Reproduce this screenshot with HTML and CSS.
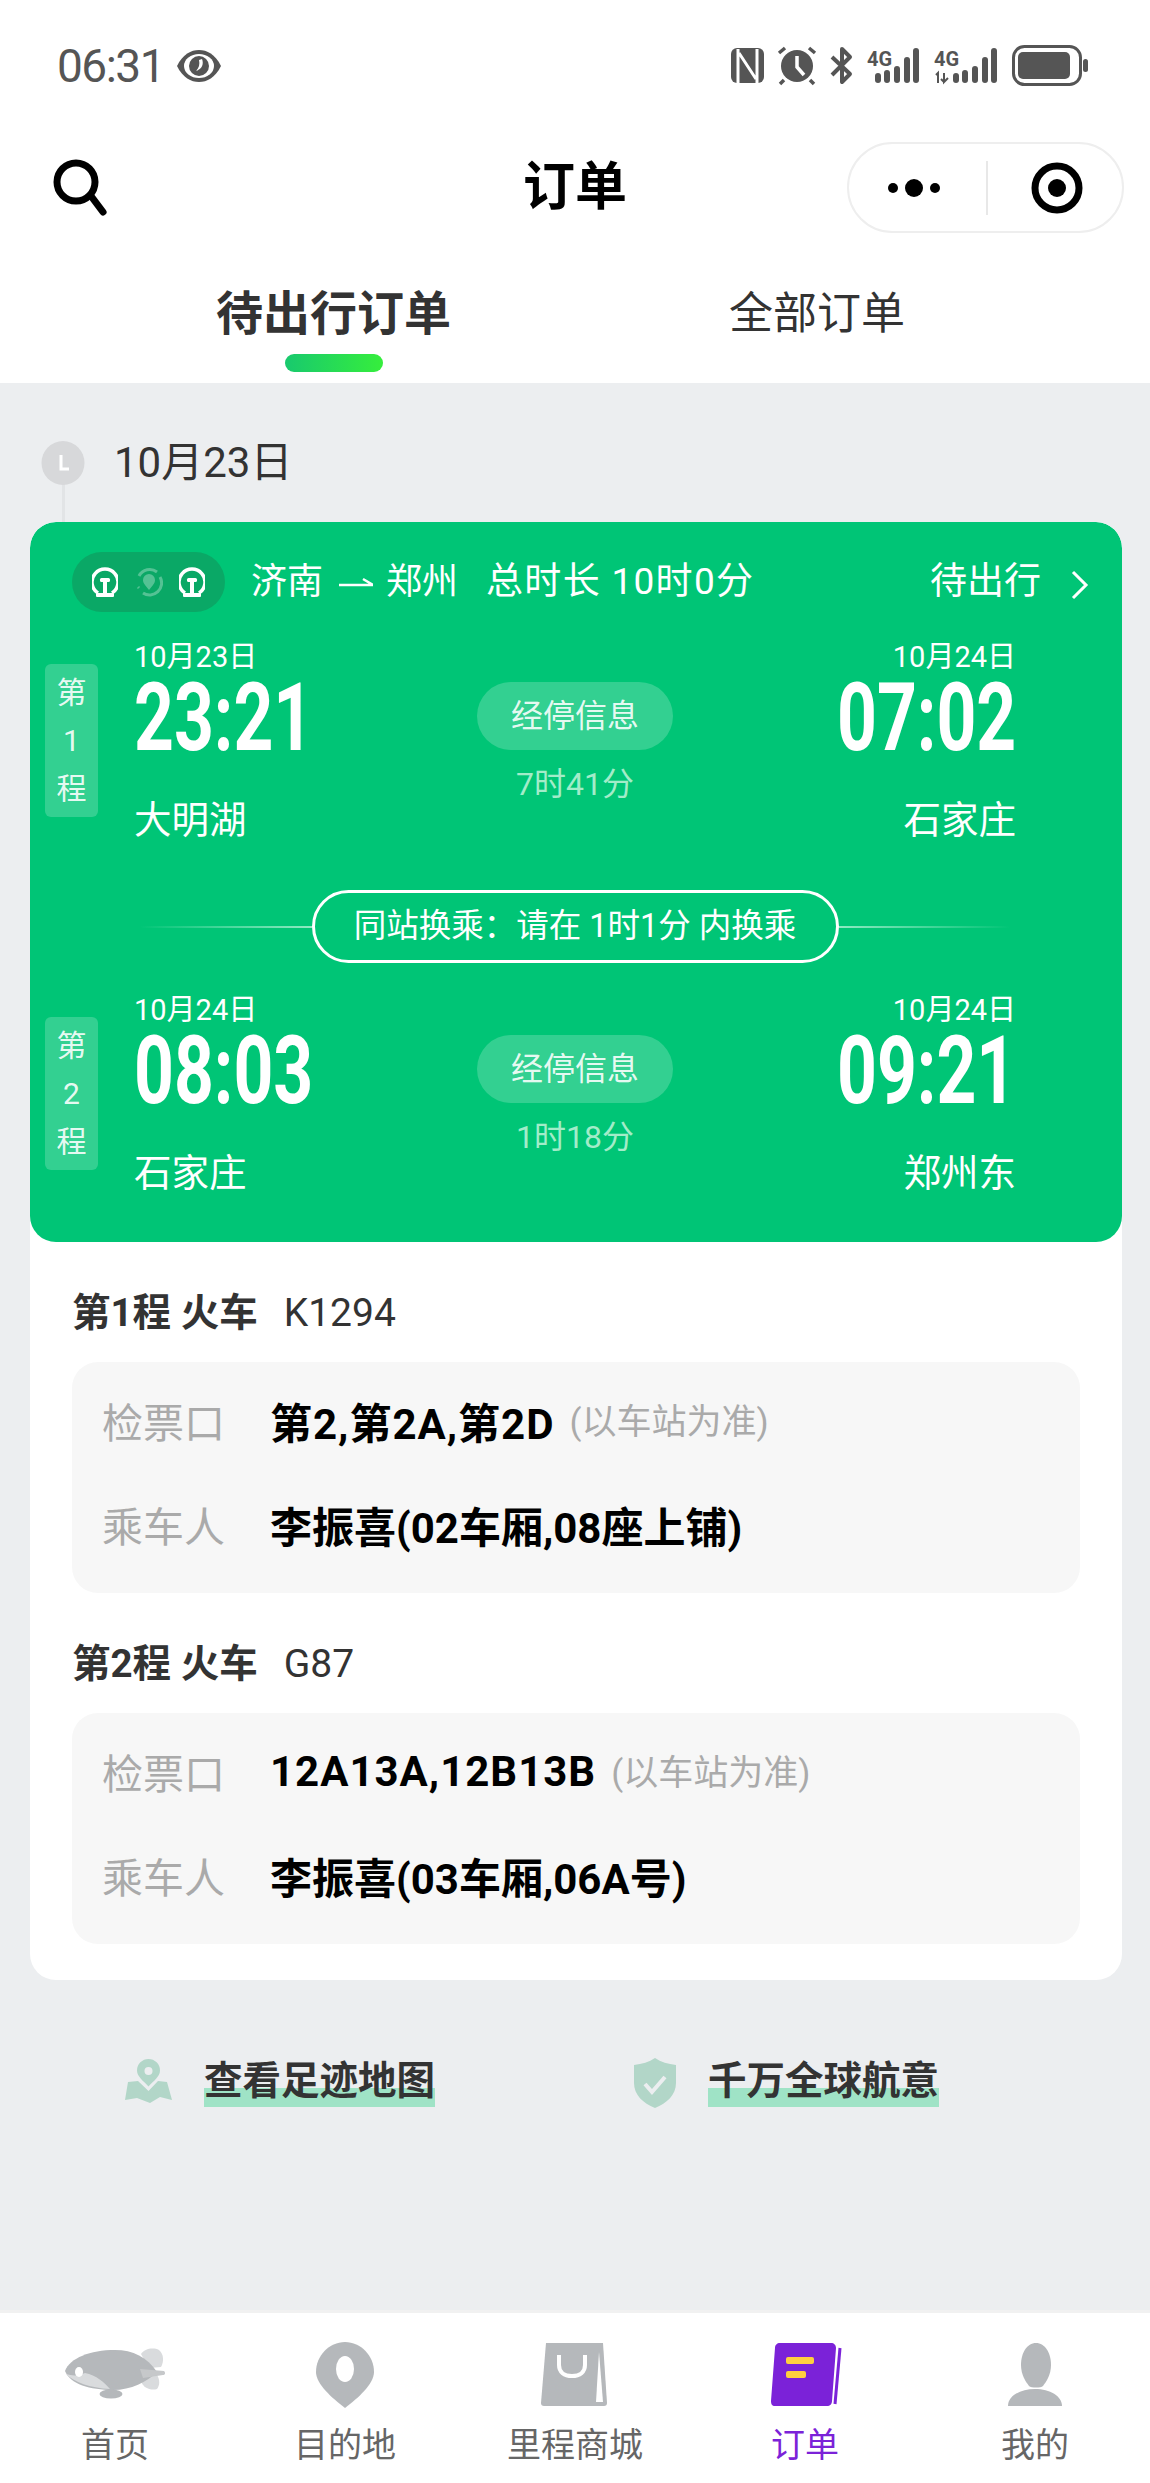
FILE: index.html
```html
<!DOCTYPE html>
<html lang="zh-CN">
  <head>
    <meta charset="UTF-8" />
    <meta name="viewport" content="width=device-width, initial-scale=1.0" />
    <title>订单</title>
    <link rel="stylesheet" href="styles.css">
  </head>
  <body>
    <header class="top">
      <div class="status">
        <div class="status-left">
          <span class="clock">06:31</span>
          <svg class="eye" width="46" height="34" viewBox="0 0 46 34">
            <path d="M1 17C7 5 15 1 23 1s16 4 22 16c-6 12-14 16-22 16S7 29 1 17z" fill="#555" />
            <ellipse cx="23" cy="17" rx="15" ry="12" fill="#fff" />
            <circle cx="23" cy="17" r="10" fill="#555" />
            <path d="M26 10c2 5 0 10-6 12 3-3 4-7 3-11z" fill="#fff" />
          </svg>
        </div>
        <svg class="status-icons" width="360" height="44" viewBox="0 0 360 44">
          <rect x="1" y="4" width="33" height="35" rx="6" fill="#555" />
          <path d="M8 5v34M27 5v34M9 9l17 26" stroke="#fff" stroke-width="3" fill="none" />
          <circle cx="67" cy="22" r="16" fill="#555" />
          <path d="M67 12v11l7 8" stroke="#fff" stroke-width="3.5" fill="none" />
          <path d="M49 9l6-5M79 4l6 5M54 36l-4 4M80 36l4 4" stroke="#555" stroke-width="3.5" fill="none" />
          <path d="M102 13l18 17-8 8V5l8 8-18 18" stroke="#555" stroke-width="4" fill="none" stroke-linejoin="round" />
          <text x="137" y="22" class="net">4G</text>
          <g fill="#555">
            <rect x="145" y="29" width="6" height="10" rx="3" />
            <rect x="154" y="26" width="6" height="13" rx="3" />
            <rect x="164" y="22" width="6" height="17" rx="3" />
            <rect x="174" y="13" width="6" height="26" rx="3" />
            <rect x="183" y="4" width="6" height="35" rx="3" />
            <rect x="223" y="29" width="6" height="10" rx="3" />
            <rect x="232" y="26" width="6" height="13" rx="3" />
            <rect x="242" y="22" width="6" height="17" rx="3" />
            <rect x="252" y="13" width="6" height="26" rx="3" />
            <rect x="261" y="4" width="6" height="35" rx="3" />
          </g>
          <text x="204" y="22" class="net">4G</text>
          <path d="M206 31l2-2v10M214 29v9l4-4M214 38l-3-3" stroke="#555" stroke-width="2" fill="none" />
          <rect x="283.500" y="2.500" width="67" height="38" rx="11" fill="none" stroke="#555" stroke-width="3" />
          <rect x="288" y="8" width="52" height="27" rx="5" fill="#555" />
          <rect x="353" y="15" width="5" height="13" rx="2.500" fill="#555" />
        </svg>
      </div>

      <div class="title-bar">
        <svg class="search" width="60" height="60" viewBox="0 0 60 60">
          <circle cx="24" cy="24" r="19" fill="none" stroke="#000" stroke-width="7" />
          <path d="M39 38l12 16" stroke="#000" stroke-width="7" stroke-linecap="round" />
        </svg>
        <h1>订单</h1>
        <div class="capsule">
          <div class="dots"><i></i><i class="big"></i><i></i></div>
          <div class="capsule-line"></div>
          <svg width="52" height="52" viewBox="0 0 52 52">
            <circle cx="26" cy="26" r="22" fill="none" stroke="#000" stroke-width="7" />
            <circle cx="26" cy="26" r="9" fill="#000" />
          </svg>
        </div>
      </div>

      <div class="tabs">
        <div class="tab active">待出行订单<span class="tab-bar"></span></div>
        <div class="tab">全部订单</div>
      </div>
    </header>

    <main class="content">
      <div class="date-row">
        <svg width="44" height="81" viewBox="0 0 44 81">
          <rect x="21" y="40" width="3" height="41" fill="#e2e4e6" />
          <ellipse cx="22" cy="22" rx="21.500" ry="22" fill="#d7d8da" />
          <path d="M20 14v14h8" stroke="#fff" stroke-width="3" fill="none" />
        </svg>
        <span>10月23日</span>
      </div>

      <section class="order">
        <div class="green">
          <div class="route">
            <div class="route-icons">
              <svg width="26" height="30" viewBox="0 0 26 30" class="rail">
                <path d="M6 26A13 13 0 1 1 20 26" />
                <rect x="8" y="11" width="10" height="4" rx="1.500" fill="#fff" stroke="none" />
                <rect x="11" y="14" width="4" height="13" fill="#fff" stroke="none" />
                <rect x="4" y="26" width="18" height="4" rx="1" fill="#fff" stroke="none" />
              </svg>
              <svg width="28" height="30" viewBox="0 0 28 30" class="rail dim">
                <path d="M4 9A12 12 0 0 1 22 5M25 10A12 12 0 0 1 8 26M3 20l1 1" />
                <path d="M14 23c-4-5-6-7-6-10a6 6 0 0 1 12 0c0 3-2 5-6 10z" fill="#fff" stroke="none" />
              </svg>
              <svg width="26" height="30" viewBox="0 0 26 30" class="rail">
                <path d="M6 26A13 13 0 1 1 20 26" />
                <rect x="8" y="11" width="10" height="4" rx="1.500" fill="#fff" stroke="none" />
                <rect x="11" y="14" width="4" height="13" fill="#fff" stroke="none" />
                <rect x="4" y="26" width="18" height="4" rx="1" fill="#fff" stroke="none" />
              </svg>
            </div>
            <span class="city">济南</span>
            <svg class="to" width="34" height="14" viewBox="0 0 34 14">
              <path d="M0 10h34L24 4" stroke="#fff" stroke-width="2.500" fill="none" />
            </svg>
            <span class="city">郑州</span>
            <span class="total">总时长 10时0分</span>
            <span class="state">待出行</span>
            <svg class="chevron" width="18" height="30" viewBox="0 0 18 30">
              <path d="M2 2l13 13L2 28" stroke="#fff" stroke-width="3" fill="none" />
            </svg>
          </div>

          <div class="leg">
            <div class="leg-no"><span>第</span><span>1</span><span>程</span></div>
            <div class="stop">
              <div class="stop-date">10月23日</div>
              <div class="stop-time">23:21</div>
              <div class="stop-name">大明湖</div>
            </div>
            <div class="middle">
              <div class="via">经停信息</div>
              <div class="span">7时41分</div>
            </div>
            <div class="stop end">
              <div class="stop-date">10月24日</div>
              <div class="stop-time">07:02</div>
              <div class="stop-name">石家庄</div>
            </div>
          </div>

          <div class="transfer">
            <div class="rule left"></div>
            <div class="transfer-pill">同站换乘：请在 1时1分 内换乘</div>
            <div class="rule"></div>
          </div>

          <div class="leg">
            <div class="leg-no"><span>第</span><span>2</span><span>程</span></div>
            <div class="stop">
              <div class="stop-date">10月24日</div>
              <div class="stop-time">08:03</div>
              <div class="stop-name">石家庄</div>
            </div>
            <div class="middle">
              <div class="via">经停信息</div>
              <div class="span">1时18分</div>
            </div>
            <div class="stop end">
              <div class="stop-date">10月24日</div>
              <div class="stop-time">09:21</div>
              <div class="stop-name">郑州东</div>
            </div>
          </div>
        </div>

        <div class="details">
          <h2><b>第1程 火车</b><span>K1294</span></h2>
          <div class="info">
            <div class="info-row">
              <span class="info-key">检票口</span>
              <b class="gate">第2,第2A,第2D</b>
              <span class="info-note">(以车站为准)</span>
            </div>
            <div class="info-row">
              <span class="info-key">乘车人</span>
              <b>李振喜(02车厢,08座上铺)</b>
            </div>
          </div>

          <h2 class="second"><b>第2程 火车</b><span>G87</span></h2>
          <div class="info">
            <div class="info-row">
              <span class="info-key">检票口</span>
              <b class="gate">12A13A,12B13B</b>
              <span class="info-note">(以车站为准)</span>
            </div>
            <div class="info-row">
              <span class="info-key">乘车人</span>
              <b>李振喜(03车厢,06A号)</b>
            </div>
          </div>
        </div>
      </section>

      <div class="links">
        <a class="link">
          <svg width="47" height="48" viewBox="0 0 47 48">
            <path d="M23.500 0a11.500 11.500 0 0 1 11.500 11.500c0 6-6 10-11.500 16-5.500-6-11.500-10-11.500-16A11.500 11.500 0 0 1 23.500 0z" fill="#b2d6c8" />
            <circle cx="23.500" cy="12" r="4" fill="#eceef0" />
            <path d="M3 23l10-1 10.500 10L33 22l9 1 5 18-12-3-10 6-13-5-12 2z" fill="#b2d6c8" />
          </svg>
          <span>查看足迹地图</span>
        </a>
        <a class="link">
          <svg width="42" height="50" viewBox="0 0 42 50">
            <path d="M21 0c6 4 13 6 21 7v18c0 12-9 20-21 25C9 45 0 37 0 25V7c8-1 15-3 21-7z" fill="#b2d6c8" />
            <path d="M11 26l7 8 13-15" stroke="#eceef0" stroke-width="4" fill="none" />
          </svg>
          <span>千万全球航意</span>
        </a>
      </div>
    </main>

    <nav class="tabbar">
      <div class="nav-item">
        <svg width="110" height="70" viewBox="0 0 110 70">
          <path d="M81 14c3-5 12-7 18-4 5 4 5 12 2 17l-12 1z" fill="#d9dbdd" />
          <path d="M83 38l14-3c3 5 3 10 0 14-6 2-14-1-16-8z" fill="#d9dbdd" />
          <path d="M5 31C10 18 30 10 55 10c18 0 32 7 42 22-10 10-26 18-44 18C30 50 10 44 5 31z" fill="#b5b8bb" />
          <path d="M6 34c8 8 24 14 44 15-5-6-14-14-25-16-6 3-13 3-19 1z" fill="#d9dbdd" />
          <ellipse cx="19" cy="32" rx="4" ry="5" fill="#fff" />
          <ellipse cx="51" cy="54" rx="11.500" ry="4.500" fill="#b5b8bb" />
          <path d="M80 29l24 2c2 2 1 4-1 4l-20 3z" fill="#c6c8ca" />
        </svg>
        <span>首页</span>
      </div>
      <div class="nav-item">
        <svg width="110" height="70" viewBox="0 0 110 70">
          <path d="M55 2c16 0 29 14 29 30C84 44 68 58 55 68 42 58 26 44 26 32 26 16 39 2 55 2z" fill="#b5b8bb" />
          <ellipse cx="55" cy="29" rx="9" ry="13" fill="#fff" />
        </svg>
        <span>目的地</span>
      </div>
      <div class="nav-item">
        <svg width="110" height="70" viewBox="0 0 110 70">
          <path d="M26 3h57l4 60c0 2-1 3-3 3H24c-2 0-3-1-3-3z" fill="#b5b8bb" />
          <path d="M39 15v10c0 7 5 11 13 11s13-4 13-11V15" fill="none" stroke="#fff" stroke-width="4" />
          <path d="M79 12l4 50h-7z" fill="#fff" />
        </svg>
        <span>里程商城</span>
      </div>
      <div class="nav-item active">
        <svg width="110" height="70" viewBox="0 0 110 70">
          <path d="M30 3h51c3 0 5 2 5 5l-4 53c0 3-2 5-5 5H25c-3 0-4-2-4-5l4-53c0-3 2-5 5-5z" fill="#7b22d8" />
          <path d="M90 8l-5 56" stroke="#7b22d8" stroke-width="3" />
          <rect x="36" y="17" width="28" height="7" rx="2" fill="#ffcf3f" />
          <rect x="36" y="31" width="20" height="7" rx="2" fill="#ffcf3f" />
        </svg>
        <span>订单</span>
      </div>
      <div class="nav-item">
        <svg width="110" height="70" viewBox="0 0 110 70">
          <path d="M56 3c9 0 15 10 15 22 0 10-5 17-8 21-2 2-12 2-14 0-3-4-8-11-8-21 0-12 6-22 15-22z" fill="#b5b8bb" />
          <path d="M28 66c0-10 12-17 27-17s27 7 27 17z" fill="#b5b8bb" />
        </svg>
        <span>我的</span>
      </div>
    </nav>
  </body>
</html>
```

FILE: styles.css
```css
* {
  margin: 0;
  padding: 0;
  box-sizing: border-box;
}

body {
  font-family: Roboto, "Noto Sans CJK SC", sans-serif;
  width: 1150px;
  height: 2483px;
  background: #eceef0;
  color: #333;
  display: flex;
  flex-direction: column;
  overflow: hidden;
}

/* Top white block */
.top {
  height: 383px;
  background: #fff;
}

.status {
  height: 132px;
  padding: 0 60px 0 57px;
  display: flex;
  justify-content: space-between;
  align-items: center;
}

.status-left {
  display: flex;
  align-items: center;
  gap: 12px;
}

.clock {
  font-size: 46px;
  font-weight: 400;
  color: #555;
  letter-spacing: -1.5px;
  line-height: 46px;
}

.net {
  font-family: Roboto, sans-serif;
  font-size: 20px;
  font-weight: 700;
  fill: #555;
}

.title-bar {
  height: 91px;
  margin-top: 10px;
  padding: 0 26px;
  display: grid;
  grid-template-columns: 1fr auto 1fr;
  align-items: center;
}

.search {
  margin-left: 26px;
}

.title-bar h1 {
  font-size: 52px;
  line-height: 60px;
  font-weight: 700;
  color: #000;
}

.capsule {
  justify-self: end;
  width: 277px;
  height: 91px;
  border: 2px solid #eeeeee;
  border-radius: 46px;
  display: flex;
  align-items: center;
  padding-left: 39px;
}

.dots {
  display: flex;
  align-items: center;
  gap: 7px;
}

.dots i {
  width: 10px;
  height: 10px;
  border-radius: 50%;
  background: #000;
}

.dots i.big {
  width: 18px;
  height: 18px;
}

.capsule-line {
  width: 2px;
  height: 54px;
  background: #e8e8e8;
  margin: 0 43px 0 46px;
}

.tabs {
  margin-top: 51px;
  padding-left: 216px;
  display: flex;
  gap: 278px;
}

.tab {
  font-size: 44px;
  line-height: 60px;
  color: #333;
  white-space: nowrap;
  display: flex;
  flex-direction: column;
  align-items: center;
}

.tab.active {
  font-size: 47px;
  font-weight: 700;
}

.tab-bar {
  width: 98px;
  height: 18px;
  margin-top: 10px;
  border-radius: 9px;
  background: linear-gradient(90deg, #18c96e, #36ee3c);
}

/* Date line */
.content {
  flex: 1;
}

.date-row {
  margin-top: 58px;
  padding-left: 41px;
  height: 81px;
  display: flex;
  gap: 29px;
  font-size: 42px;
  line-height: 44px;
}

/* Order card */
.order {
  margin: 0 28px 0 30px;
  background: #fff;
  border-radius: 26px;
  overflow: hidden;
}

.green {
  height: 720px;
  padding-top: 30px;
  background: #00c576;
  border-radius: 26px;
  color: #fff;
}

.route {
  height: 60px;
  padding: 0 33px 0 42px;
  display: flex;
  align-items: center;
  font-size: 36px;
}

.route span {
  margin-bottom: 8px;
}

.route-icons {
  width: 153px;
  height: 60px;
  margin-right: 26px;
  padding: 0 20px;
  border-radius: 30px;
  background: #0aa866;
  display: flex;
  align-items: center;
  justify-content: space-between;
}

.rail {
  fill: none;
  stroke: #fff;
  stroke-width: 3.5;
}

.rail.dim {
  opacity: 0.3;
  stroke-width: 3;
}

.to {
  margin: 0 13px 0 16px;
}

.total {
  margin-left: 28px;
  font-size: 37px;
  letter-spacing: 1.3px;
}

.state {
  margin-left: auto;
  font-size: 37px;
}

.chevron {
  margin: 6px 0 0 30px;
}

.leg {
  margin-top: 28px;
  padding: 0 106px 0 15px;
  display: flex;
  align-items: center;
}

.leg-no {
  width: 53px;
  height: 153px;
  margin-right: 36px;
  border-radius: 6px;
  background: rgba(255, 255, 255, 0.2);
  display: flex;
  flex-direction: column;
  align-items: center;
  justify-content: center;
  font-size: 30px;
  line-height: 48px;
  color: rgba(255, 255, 255, 0.9);
}

.stop {
  flex: 1;
  display: flex;
  flex-direction: column;
  white-space: nowrap;
}

.stop.end {
  align-items: flex-end;
}

.stop-date {
  margin-top: 1px;
  font-size: 29px;
  line-height: 33px;
}

.stop-time {
  height: 68px;
  margin-top: 10px;
  font-size: 94px;
  line-height: 68px;
  font-weight: 700;
  transform: scaleX(0.74);
  transform-origin: left center;
}

.stop.end .stop-time {
  transform-origin: right center;
}

.stop-name {
  margin-top: 46px;
  margin-bottom: -1px;
  font-size: 37.500px;
  line-height: 44px;
}

.middle {
  width: 196px;
  display: flex;
  flex-direction: column;
  align-items: center;
}

.via {
  width: 196px;
  height: 68px;
  border-radius: 34px;
  background: rgba(255, 255, 255, 0.2);
  font-size: 32px;
  line-height: 68px;
  text-align: center;
  color: rgba(255, 255, 255, 0.9);
}

.span {
  margin-top: 18px;
  font-size: 32px;
  line-height: 32px;
  color: #a2ecc9;
}

.transfer {
  margin-top: 49px;
  height: 73px;
  padding: 0 112px 0 110px;
  display: flex;
  align-items: center;
}

.transfer-pill {
  width: 527px;
  height: 73px;
  border: 3px solid #fff;
  border-radius: 37px;
  font-size: 32.500px;
  line-height: 67px;
  text-align: center;
  white-space: nowrap;
}

.rule {
  flex: 1;
  height: 2px;
  background: linear-gradient(90deg, #8fe9c2, rgba(143, 233, 194, 0));
}

.rule.left {
  background: linear-gradient(90deg, rgba(143, 233, 194, 0), #8fe9c2);
}

.transfer + .leg {
  margin-top: 30px;
}

/* Ticket details */
.details {
  padding: 46px 42px 36px;
}

.details h2 {
  font-size: 38.500px;
  line-height: 50px;
  font-weight: 400;
  display: flex;
  gap: 26px;
}

.details h2 span {
  font-size: 39px;
}

.details h2.second {
  margin-top: 46px;
}

.info {
  height: 231px;
  margin-top: 24px;
  padding: 6px 30px 17px;
  background: #f7f7f7;
  border-radius: 26px;
}

.info-row {
  height: 104px;
  display: flex;
  align-items: center;
  font-size: 42px;
  color: #000;
  white-space: nowrap;
}

.info-row .gate {
  letter-spacing: 1px;
}

.info-key {
  width: 168px;
  font-size: 41px;
  color: #aaa;
}

.info-note {
  margin-left: 15px;
  margin-bottom: 4px;
  font-size: 35px;
  color: #aaa;
}

/* Links under the card */
.links {
  margin-top: 78px;
  padding-left: 125px;
  display: flex;
  gap: 199px;
}

.link {
  display: flex;
  align-items: center;
  gap: 32px;
}

.link span {
  padding-bottom: 4px;
  font-size: 38.500px;
  line-height: 44px;
  font-weight: 700;
  background: linear-gradient(#9fe3c6, #9fe3c6) bottom / 100% 19px no-repeat;
}

/* Bottom tabs */
.tabbar {
  height: 173px;
  background: #fff;
  border-top: 3px solid #f1f1f1;
  display: grid;
  grid-template-columns: repeat(5, 1fr);
}

.nav-item {
  padding-top: 27px;
  display: flex;
  flex-direction: column;
  align-items: center;
  font-size: 34px;
  line-height: 40px;
  color: #666;
}

.nav-item span {
  margin-top: 15px;
}

.nav-item.active {
  color: #7b22d8;
}
```
